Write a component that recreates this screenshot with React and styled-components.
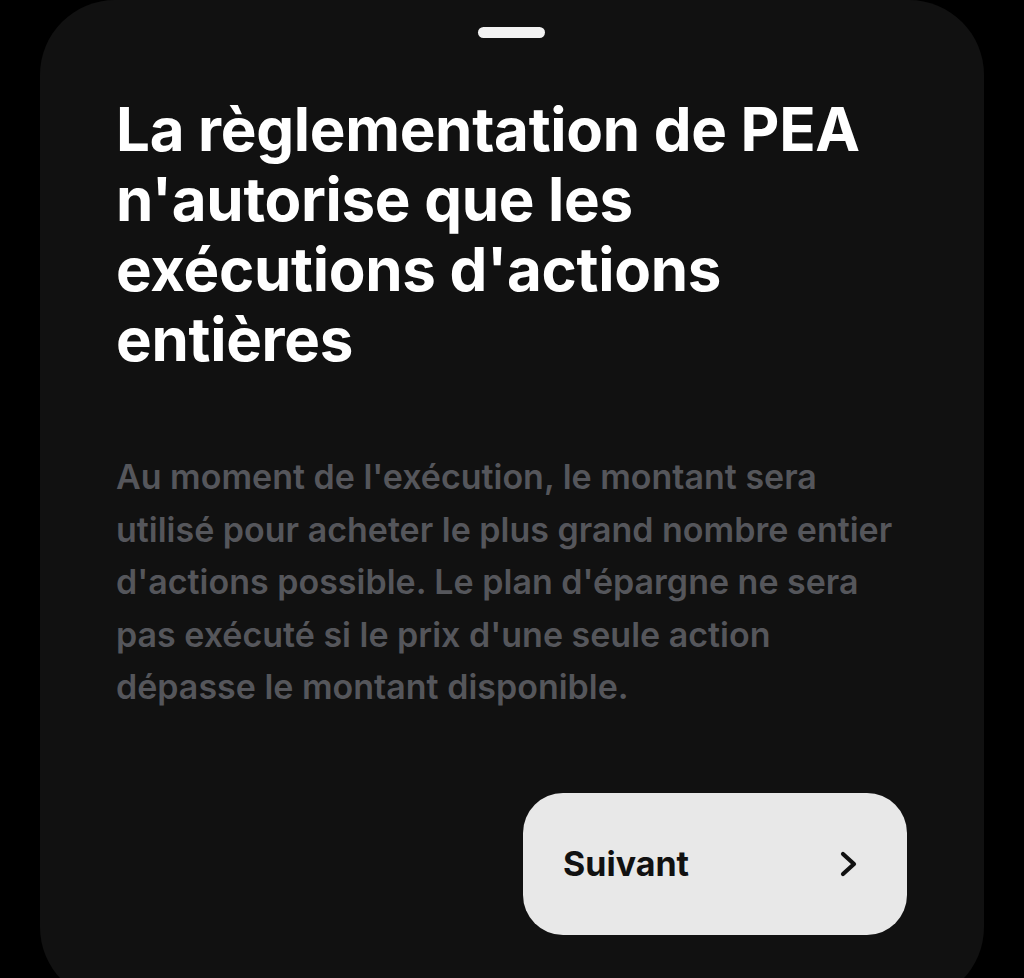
import React from "react";
import styled, { createGlobalStyle } from "styled-components";

const GlobalStyle = createGlobalStyle`
  html, body {
    margin: 0;
    padding: 0;
    background: #000;
    overflow: hidden;
  }

  body {
    font-family: Inter, "Noto Sans", "Liberation Sans", sans-serif;
  }
`;

const Screen = styled.div`
  height: 978px;
  padding: 0 40px;
  overflow: hidden;
`;

const Sheet = styled.section`
  background: #111111;
  height: 1002px;
  border-radius: 75px;
  box-sizing: border-box;
  padding: 27px 77px 0 76px;
  display: flex;
  flex-direction: column;
`;

const Handle = styled.div`
  align-self: center;
  width: 67px;
  height: 11px;
  border-radius: 6px;
  background: #f2f2f2;
`;

const Title = styled.h1`
  margin: 56px 0 0;
  color: #fff;
  font-size: 60px;
  line-height: 70px;
  font-weight: 700;
  letter-spacing: -0.3px;
`;

const Body = styled.p`
  margin: 77px 0 0;
  color: #55565b;
  font-size: 34px;
  line-height: 52.5px;
  font-weight: 600;
`;

const NextButton = styled.button`
  align-self: flex-end;
  margin-top: 79px;
  width: 384px;
  height: 142px;
  border: none;
  border-radius: 40px;
  background: #e8e8e8;
  color: #111;
  padding: 0 48px 0 40px;
  display: flex;
  align-items: center;
  justify-content: space-between;
  font-family: inherit;
  font-size: 34px;
  font-weight: 700;
  cursor: pointer;
`;

const Chevron = () => (
  <svg width="20" height="26" viewBox="0 0 20 26" fill="none">
    <path
      d="M4 3 L15 13 L4 23"
      stroke="#111"
      strokeWidth="4.2"
      strokeLinecap="round"
      strokeLinejoin="round"
    />
  </svg>
);

export default function App() {
  return (
    <>
      <GlobalStyle />
      <Screen>
        <Sheet>
          <Handle />
          <Title>
            La règlementation de PEA
            <br />
            n'autorise que les
            <br />
            exécutions d'actions
            <br />
            entières
          </Title>
          <Body>
            Au moment de l'exécution, le montant sera utilisé pour acheter le
            plus grand nombre entier d'actions possible. Le plan d'épargne ne
            sera pas exécuté si le prix d'une seule action dépasse le montant
            disponible.
          </Body>
          <NextButton>
            Suivant
            <Chevron />
          </NextButton>
        </Sheet>
      </Screen>
    </>
  );
}
